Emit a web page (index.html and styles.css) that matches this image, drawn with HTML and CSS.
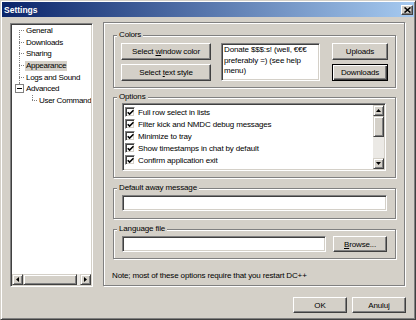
FILE: index.html
```html
<!DOCTYPE html>
<html lang="en">
  <head>
    <meta charset="UTF-8" />
    <meta name="viewport" content="width=device-width, initial-scale=1.0" />
    <title>Settings</title>
    <link rel="stylesheet" href="styles.css">
  </head>

  <body>
    <div class="window">
      <header class="titlebar">
        <span class="title">Settings</span>
        <button class="close" title="Close">
          <svg width="7" height="6" viewBox="0 0 7 6"><path d="M0.5 0.5l6 5M6.5 0.5l-6 5" stroke="#000" stroke-width="1.6" /></svg>
        </button>
      </header>

      <section class="body">
        <aside class="tree">
          <ul class="tree-list">
            <li class="node"><span class="twig first"></span><span class="label">General</span></li>
            <li class="node"><span class="twig"></span><span class="label">Downloads</span></li>
            <li class="node"><span class="twig"></span><span class="label">Sharing</span></li>
            <li class="node"><span class="twig"></span><span class="label selected">Appearance</span></li>
            <li class="node"><span class="twig"></span><span class="label">Logs and Sound</span></li>
            <li class="node"><span class="twig last"><span class="expander"></span></span><span class="label">Advanced</span></li>
            <li class="node child"><span class="twig last"></span><span class="label">User Command</span></li>
          </ul>
          <div class="hscroll">
            <span class="sb-btn">
              <svg width="3" height="5" viewBox="0 0 3 5"><path d="M3 0v5L0 2.5z" /></svg>
            </span>
            <span class="sb-thumb-h"></span>
            <span class="sb-track"></span>
            <span class="sb-btn">
              <svg width="3" height="5" viewBox="0 0 3 5"><path d="M0 0v5l3-2.5z" /></svg>
            </span>
          </div>
        </aside>

        <main class="page">
          <fieldset class="group colors">
            <legend>Colors</legend>
            <div class="colors-body">
              <div class="btn-col wide">
                <button class="btn">Select <u>w</u>indow color</button>
                <button class="btn">Select <u>t</u>ext style</button>
              </div>
              <div class="memo">Donate $$$:s! (well, €€€ preferably =) (see help menu)</div>
              <div class="btn-col narrow">
                <button class="btn">Uploads</button>
                <button class="btn default">Downloads</button>
              </div>
            </div>
          </fieldset>

          <fieldset class="group options">
            <legend>Options</legend>
            <div class="group-body">
              <div class="listbox">
                <ul class="checks">
                  <li class="check-row"><span class="check"><svg width="7" height="7" viewBox="0 0 7 7"><path d="M0.7 3.2l1.9 1.9 3.9-3.9" fill="none" stroke="#000" stroke-width="1.6" /></svg></span>Full row select in lists</li>
                  <li class="check-row"><span class="check"><svg width="7" height="7" viewBox="0 0 7 7"><path d="M0.7 3.2l1.9 1.9 3.9-3.9" fill="none" stroke="#000" stroke-width="1.6" /></svg></span>Filter kick and NMDC debug messages</li>
                  <li class="check-row"><span class="check"><svg width="7" height="7" viewBox="0 0 7 7"><path d="M0.7 3.2l1.9 1.9 3.9-3.9" fill="none" stroke="#000" stroke-width="1.6" /></svg></span>Minimize to tray</li>
                  <li class="check-row"><span class="check"><svg width="7" height="7" viewBox="0 0 7 7"><path d="M0.7 3.2l1.9 1.9 3.9-3.9" fill="none" stroke="#000" stroke-width="1.6" /></svg></span>Show timestamps in chat by default</li>
                  <li class="check-row"><span class="check"><svg width="7" height="7" viewBox="0 0 7 7"><path d="M0.7 3.2l1.9 1.9 3.9-3.9" fill="none" stroke="#000" stroke-width="1.6" /></svg></span>Confirm application exit</li>
                </ul>
                <div class="vscroll">
                  <span class="sb-btn">
                    <svg width="5" height="3" viewBox="0 0 5 3"><path d="M0 3h5L2.5 0z" /></svg>
                  </span>
                  <span class="sb-thumb-v"></span>
                  <span class="sb-track"></span>
                  <span class="sb-btn">
                    <svg width="5" height="3" viewBox="0 0 5 3"><path d="M0 0h5L2.5 3z" /></svg>
                  </span>
                </div>
              </div>
            </div>
          </fieldset>

          <fieldset class="group away">
            <legend>Default away message</legend>
            <div class="group-body">
              <input class="field full" type="text" />
            </div>
          </fieldset>

          <fieldset class="group language">
            <legend>Language file</legend>
            <div class="group-body row">
              <input class="field" type="text" />
              <button class="btn browse"><u>B</u>rowse...</button>
            </div>
          </fieldset>

          <p class="note">Note; most of these options require that you restart DC++</p>
        </main>
      </section>

      <footer class="footer">
        <button class="btn action">OK</button>
        <button class="btn action">Anuluj</button>
      </footer>
    </div>
  </body>
</html>
```

FILE: styles.css
```css
html {
  box-sizing: border-box;
  font-family: "Liberation Sans", Arial, sans-serif;
  font-size: 8px;
  letter-spacing: -0.15px;
}

*,
*:before,
*:after {
  box-sizing: inherit;
}

body {
  margin: 0;
  background-color: #d4d0c8;
}

ul {
  margin: 0;
  padding: 0;
  list-style: none;
}

.window {
  width: 416px;
  height: 320px;
  padding: 1px;
  display: flex;
  flex-direction: column;
  background-color: #d4d0c8;
  border: 1px solid;
  border-color: #d4d0c8 #404040 #404040 #d4d0c8;
  box-shadow: inset 1px 1px #fff, inset -1px -1px #808080;
}

/* barra de titulo */
.titlebar {
  flex: none;
  height: 15px;
  padding: 0 1px 0 2px;
  display: flex;
  justify-content: space-between;
  align-items: center;
  background: linear-gradient(to right, #0a246a, #a6caf0);
}

.title {
  color: #fff;
  font-weight: bold;
  font-size: 8.5px;
  letter-spacing: 0;
}

.close {
  width: 12px;
  height: 10px;
  padding: 0;
  display: flex;
  justify-content: center;
  align-items: center;
  background-color: #d4d0c8;
  border: 1px solid;
  border-color: #fff #404040 #404040 #fff;
  box-shadow: inset -1px -1px #808080;
}

.body {
  display: flex;
  gap: 10px;
  padding: 5px 0 0 8px;
}

/* arbol de categorias */
.tree {
  width: 83px;
  height: 264px;
  margin-top: 1px;
  display: flex;
  flex-direction: column;
  background-color: #fff;
  border: 1px solid;
  border-color: #808080 #fff #fff #808080;
  box-shadow: inset 1px 1px #404040, inset -1px -1px #d4d0c8;
  padding: 1px;
}

.tree-list {
  flex-grow: 1;
  overflow: hidden;
}

.node {
  display: flex;
  align-items: center;
  height: 11.7px;
  white-space: nowrap;
}

.twig {
  flex: none;
  align-self: stretch;
  width: 6px;
  margin-left: 7px;
  display: flex;
  align-items: center;
  background-image: repeating-linear-gradient(to right, #808080 0 1px, transparent 1px 2px),
    repeating-linear-gradient(#808080 0 1px, transparent 1px 2px);
  background-size: 100% 1px, 1px 100%;
  background-position: 0 5px, 0 0;
  background-repeat: no-repeat;
}

.twig.first {
  background-size: 100% 1px, 1px 60%;
  background-position: 0 5px, 0 100%;
}

.twig.last {
  background-size: 100% 1px, 1px 6px;
  background-position: 0 5px, 0 0;
}

.node.child .twig {
  margin-left: 20px;
}

.expander {
  width: 9px;
  height: 9px;
  margin-left: -4px;
  margin-top: -1px;
  background: linear-gradient(#000, #000) center / 5px 1px no-repeat, #fff;
  border: 1px solid #808080;
}

.label {
  padding: 0 1px;
  line-height: 10px;
  letter-spacing: -0.3px;
}

.label.selected {
  background-color: #d4d0c8;
}

.hscroll {
  display: flex;
  height: 11px;
}

.sb-btn {
  flex: none;
  width: 11px;
  height: 11px;
  display: flex;
  justify-content: center;
  align-items: center;
  background-color: #d4d0c8;
  border: 1px solid;
  border-color: #d4d0c8 #404040 #404040 #d4d0c8;
  box-shadow: inset 1px 1px #fff, inset -1px -1px #808080;
}

.sb-track {
  flex-grow: 1;
  background-color: #ebe9e5;
}

.sb-thumb-h {
  flex: 0 0 54px;
  background-color: #d4d0c8;
  border: 1px solid;
  border-color: #d4d0c8 #404040 #404040 #d4d0c8;
  box-shadow: inset 1px 1px #fff, inset -1px -1px #808080;
}

.sb-thumb-v {
  flex: 0 0 21px;
  background-color: #d4d0c8;
  border: 1px solid;
  border-color: #d4d0c8 #404040 #404040 #d4d0c8;
  box-shadow: inset 1px 1px #fff, inset -1px -1px #808080;
}

/* pagina de opciones */
.page {
  width: 302px;
  height: 264px;
  padding: 7px 8px 0 9px;
  display: flex;
  flex-direction: column;
  border: 1px solid #808080;
  box-shadow: inset 1px 1px #fff, 1px 1px #fff;
}

.group {
  margin: 0;
  padding: 0;
  min-width: 0;
  border: 1px solid #808080;
  box-shadow: inset 1px 1px #fff, 1px 1px #fff;
}

.group legend {
  margin-left: 3px;
  padding: 0 2px;
  line-height: 10px;
  background-color: #d4d0c8;
}

.colors {
  height: 58px;
}

.options {
  height: 86px;
  margin-top: 4px;
}

.away {
  height: 36px;
  margin-top: 5px;
}

.language {
  height: 35px;
  margin-top: 5px;
}

.colors-body {
  display: flex;
  padding: 3px 7px 0 7px;
}

.btn-col {
  display: flex;
  flex-direction: column;
  gap: 4px;
}

.btn-col.wide {
  width: 90px;
}

.btn-col.narrow {
  width: 56px;
  margin-left: 12px;
}

.btn {
  height: 17px;
  padding: 0;
  font: inherit;
  letter-spacing: inherit;
  color: #000;
  background-color: #d4d0c8;
  border: 1px solid;
  border-color: #fff #404040 #404040 #fff;
  box-shadow: inset -1px -1px #808080;
}

.btn.default {
  border-color: #000;
  box-shadow: inset 1px 1px #fff, inset -1px -1px #404040, inset -2px -2px #808080;
}

.memo {
  width: 99px;
  height: 38px;
  margin-left: 10px;
  padding: 1px 2px;
  line-height: 10.5px;
  background-color: #fff;
  border: 1px solid;
  border-color: #808080 #fff #fff #808080;
  box-shadow: inset 1px 1px #404040, inset -1px -1px #d4d0c8;
}

.group-body {
  padding: 2px 0 0 8px;
}

.options .group-body {
  padding-top: 1px;
}

.group-body.row {
  display: flex;
  gap: 7px;
}

.listbox {
  width: 264px;
  height: 68px;
  padding: 2px;
  display: flex;
  background-color: #fff;
  border: 1px solid;
  border-color: #808080 #fff #fff #808080;
  box-shadow: inset 1px 1px #404040, inset -1px -1px #d4d0c8;
}

.checks {
  flex-grow: 1;
  padding: 1px 0 0 1px;
  overflow: hidden;
  margin: -1px 0 0 -1px;
}

.check-row {
  display: flex;
  align-items: center;
  gap: 3px;
  height: 12px;
  white-space: nowrap;
}

.check {
  flex: none;
  width: 10px;
  height: 10px;
  display: flex;
  justify-content: center;
  align-items: center;
  background-color: #fff;
  border: 1px solid;
  border-color: #808080 #fff #fff #808080;
  box-shadow: inset 1px 1px #404040, inset -1px -1px #d4d0c8;
}

.vscroll {
  flex: none;
  width: 11px;
  margin: -1px -1px -1px 0;
  display: flex;
  flex-direction: column;
}

.field {
  height: 16px;
  width: 204px;
  margin: 0;
  font: inherit;
  background-color: #fff;
  border: 1px solid;
  border-color: #808080 #fff #fff #808080;
  box-shadow: inset 1px 1px #404040, inset -1px -1px #d4d0c8;
}

.field.full {
  width: 265px;
}

.btn.browse {
  width: 54px;
  height: 16px;
}

.note {
  margin: 11px 0 0 -1px;
  line-height: 11px;
}

.footer {
  display: flex;
  justify-content: flex-end;
  gap: 5px;
  padding: 10px 8px 0 0;
}

.btn.action {
  width: 54px;
  height: 16px;
}
```
